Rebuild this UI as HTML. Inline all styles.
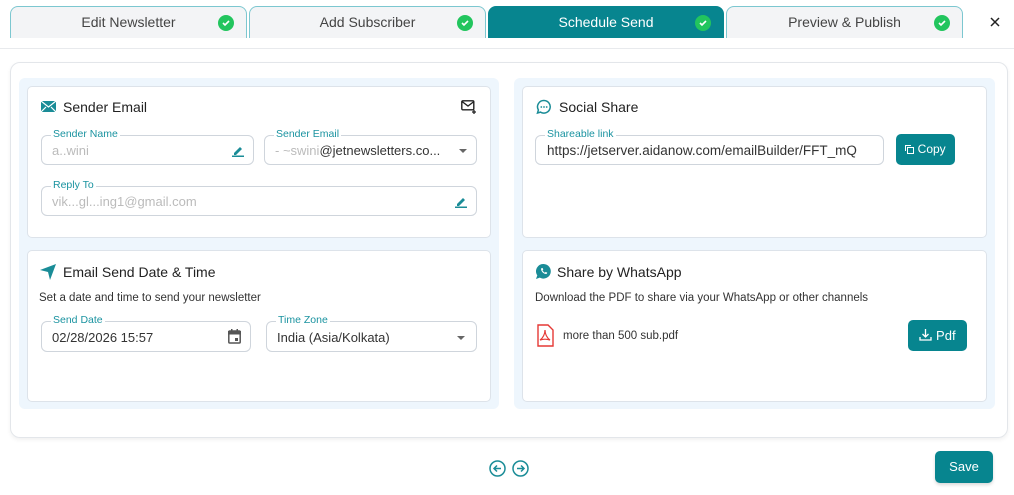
<!DOCTYPE html>
<html><head><meta charset="utf-8"><style>
*{box-sizing:border-box;margin:0;padding:0}
body{width:1014px;height:495px;background:#fff;font-family:"Liberation Sans",sans-serif;color:#222;position:relative;overflow:hidden}
.a{position:absolute}
.tab{position:absolute;top:6px;height:32px;border:1px solid #7cc7d0;border-bottom:none;border-radius:8px 8px 0 0;background:#f3f4f6;font-size:14px;color:#444;text-align:center;line-height:31px}
.tab .ck{position:absolute;right:12px;top:8px;width:16px;height:16px;border-radius:50%;background:#22c55e}
.tab .ck svg{position:absolute;left:3px;top:3px}
.tab.on{background:#07858f;color:#fff;border-color:#07858f}
.panel{position:absolute;background:#eef6fd;border-radius:6px}
.card{position:absolute;background:#fff;border:1px solid #dde3ea;border-radius:5px}
.h{position:absolute;font-size:14px;color:#222}
.f{position:absolute;border:1px solid #cfd5dc;border-radius:6px;background:#fff;font-size:13px;color:#333}
.f .l{position:absolute;top:-8px;left:9px;background:#fff;padding:0 2px;font-size:10.5px;color:#1a93a0;line-height:13px}
.f .v{position:absolute;left:10px;top:7px;white-space:nowrap}
.btn{position:absolute;background:#07858f;color:#fff;border-radius:5px;font-size:12px;text-align:center}
.p{position:absolute;font-size:11.5px;color:#333}
</style></head><body>
<div class="tab" style="left:10px;width:237px">Edit Newsletter<span class="ck"><svg width="10" height="10"><path d="M2 5l2 2 4-4" stroke="#fff" stroke-width="1.6" fill="none"/></svg></span></div>
<div class="tab" style="left:249px;width:237px">Add Subscriber<span class="ck"><svg width="10" height="10"><path d="M2 5l2 2 4-4" stroke="#fff" stroke-width="1.6" fill="none"/></svg></span></div>
<div class="tab on" style="left:488px;width:236px">Schedule Send<span class="ck"><svg width="10" height="10"><path d="M2 5l2 2 4-4" stroke="#fff" stroke-width="1.6" fill="none"/></svg></span></div>
<div class="tab" style="left:726px;width:237px">Preview &amp; Publish<span class="ck"><svg width="10" height="10"><path d="M2 5l2 2 4-4" stroke="#fff" stroke-width="1.6" fill="none"/></svg></span></div>
<svg class="a" style="left:990px;top:17px" width="10" height="10"><path d="M1 1l8 8M9 1L1 9" stroke="#222" stroke-width="1.5"/></svg>
<div class="a" style="left:0;top:48px;width:1014px;height:1px;background:#e8eaed"></div>

<div class="a" style="left:10px;top:62px;width:998px;height:376px;border:1px solid #e3e6ea;border-radius:10px;box-shadow:0 2px 4px rgba(0,0,0,.06)"></div>
<div class="panel" style="left:19px;top:78px;width:480px;height:331px"></div>
<div class="panel" style="left:514px;top:78px;width:481px;height:331px"></div>

<div class="card" style="left:27px;top:86px;width:464px;height:152px"></div>
<svg class="a" style="left:41px;top:101px" width="15" height="11"><rect width="15" height="11" fill="#1a8c97"/><path d="M0 0l7.5 6L15 0M0 11l5-5M15 11l-5-5" stroke="#fff" stroke-width="1.2" fill="none"/></svg>
<div class="h" style="left:63px;top:99px">Sender Email</div>
<svg class="a" style="left:461px;top:100px" width="16" height="15"><rect x="0.8" y="0.8" width="12" height="9" rx="1" stroke="#222" stroke-width="1.4" fill="none"/><path d="M1 1.5l6 4.5 6-4.5" stroke="#222" stroke-width="1.3" fill="none"/><path d="M13 10v4M11 12h4" stroke="#222" stroke-width="1.3"/></svg>
<div class="f" style="left:41px;top:135px;width:213px;height:30px"><span class="l">Sender Name</span><span class="v" style="color:#bbb">a..wini</span>
<svg class="a" style="left:190px;top:8px" width="12" height="13"><path d="M2 9l6-6 2 2-6 6H2z" fill="#1a8c97"/><rect x="0" y="11.5" width="12" height="1.5" fill="#1a8c97"/></svg></div>
<div class="f" style="left:264px;top:135px;width:213px;height:30px"><span class="l">Sender Email</span><span class="v" style="color:#333"><span style="color:#bbb">- ~swini</span>@jetnewsletters.co...</span>
<svg class="a" style="left:194px;top:13px" width="8" height="5"><path d="M0 0h8L4 4z" fill="#666"/></svg></div>
<div class="f" style="left:41px;top:186px;width:436px;height:30px"><span class="l">Reply To</span><span class="v" style="color:#bbb">vik...gl...ing1@gmail.com</span>
<svg class="a" style="left:413px;top:8px" width="12" height="13"><path d="M2 9l6-6 2 2-6 6H2z" fill="#1a8c97"/><rect x="0" y="11.5" width="12" height="1.5" fill="#1a8c97"/></svg></div>

<div class="card" style="left:27px;top:250px;width:464px;height:152px"></div>
<svg class="a" style="left:40px;top:264px" width="16" height="16"><path d="M0 6L16 0 10 16 8 8z" fill="#1a8c97"/></svg>
<div class="h" style="left:63px;top:264px">Email Send Date &amp; Time</div>
<div class="p" style="left:39px;top:292px">Set a date and time to send your newsletter</div>
<div class="f" style="left:41px;top:321px;width:210px;height:31px"><span class="l">Send Date</span><span class="v" style="top:8px">02/28/2026 15:57</span>
<svg class="a" style="left:186px;top:7px" width="13" height="15"><rect x="0.8" y="2" width="11.4" height="12" rx="1" stroke="#555" stroke-width="1.5" fill="none"/><rect x="0" y="2" width="13" height="3.5" fill="#555"/><rect x="3" y="0" width="1.5" height="3" fill="#555"/><rect x="8.5" y="0" width="1.5" height="3" fill="#555"/><rect x="7" y="9" width="3" height="3" fill="#555"/></svg></div>
<div class="f" style="left:266px;top:321px;width:211px;height:31px"><span class="l">Time Zone</span><span class="v" style="top:8px">India (Asia/Kolkata)</span>
<svg class="a" style="left:190px;top:14px" width="8" height="5"><path d="M0 0h8L4 4z" fill="#666"/></svg></div>

<div class="card" style="left:522px;top:86px;width:465px;height:152px"></div>
<svg class="a" style="left:536px;top:99px" width="16" height="16"><path d="M8 1.5a6.3 6.3 0 1 1-3.5 11.6L1.5 14l.9-3A6.3 6.3 0 0 1 8 1.5z" stroke="#1a8c97" stroke-width="1.5" fill="none"/><circle cx="5.3" cy="8" r=".9" fill="#1a8c97"/><circle cx="8" cy="8" r=".9" fill="#1a8c97"/><circle cx="10.7" cy="8" r=".9" fill="#1a8c97"/></svg>
<div class="h" style="left:559px;top:99px">Social Share</div>
<div class="f" style="left:535px;top:135px;width:349px;height:30px"><span class="l">Shareable link</span><span class="v" style="left:11px;top:7px;font-size:13.5px">https://jetserver.aidanow.com/emailBuilder/FFT_mQ</span></div>
<div class="btn" style="left:896px;top:134px;width:59px;height:31px;line-height:31px"><svg width="9" height="9" style="vertical-align:-1px"><rect x="2.5" y="2.5" width="6" height="6" stroke="#fff" fill="none"/><path d="M.5 6V.5H6" stroke="#fff" fill="none"/></svg> Copy</div>

<div class="card" style="left:522px;top:250px;width:465px;height:152px"></div>
<svg class="a" style="left:536px;top:264px" width="15" height="15"><path d="M7.5 0a7.3 7.3 0 1 1-3.7 13.6L0 15l1.3-3.6A7.3 7.3 0 0 1 7.5 0z" fill="#1a8c97"/><path d="M5 4.5c0 3 2.5 5.5 5.5 5.5l.8-1.3-1.6-.8-.8.8c-1-.4-2-1.4-2.4-2.4l.8-.8-.8-1.6z" fill="#fff"/></svg>
<div class="h" style="left:557px;top:264px">Share by WhatsApp</div>
<div class="p" style="left:535px;top:292px">Download the PDF to share via your WhatsApp or other channels</div>
<svg class="a" style="left:537px;top:324px" width="17" height="23"><path d="M1 1h10l5 5v16H1z" stroke="#e53935" stroke-width="1.4" fill="none"/><path d="M8 6c0 4-2 8-5 10 3-1 7-1 10 0-3-2-5-6-5-10z" stroke="#e53935" stroke-width="1.2" fill="none"/></svg>
<div class="p" style="left:563px;top:330px">more than 500 sub.pdf</div>
<div class="btn" style="left:908px;top:320px;width:59px;height:31px;line-height:31px;font-size:13px"><svg width="13" height="13" style="vertical-align:-1px"><path d="M6.5 1v8M3.5 6l3 3 3-3M1 9v3h11V9" stroke="#fff" stroke-width="1.3" fill="none"/></svg> Pdf</div>

<svg class="a" style="left:489px;top:460px" width="40" height="17"><circle cx="8.5" cy="8.5" r="7.5" stroke="#1a8c97" stroke-width="1.5" fill="none"/><path d="M12 8.5H5M8 5.5l-3 3 3 3" stroke="#1a8c97" stroke-width="1.5" fill="none"/><circle cx="31.5" cy="8.5" r="7.5" stroke="#1a8c97" stroke-width="1.5" fill="none"/><path d="M28 8.5h7M32 5.5l3 3-3 3" stroke="#1a8c97" stroke-width="1.5" fill="none"/></svg>
<div class="btn" style="left:935px;top:451px;width:58px;height:32px;line-height:32px;font-size:13px;box-shadow:0 2px 3px rgba(0,0,0,.15)">Save</div>
</body></html>
